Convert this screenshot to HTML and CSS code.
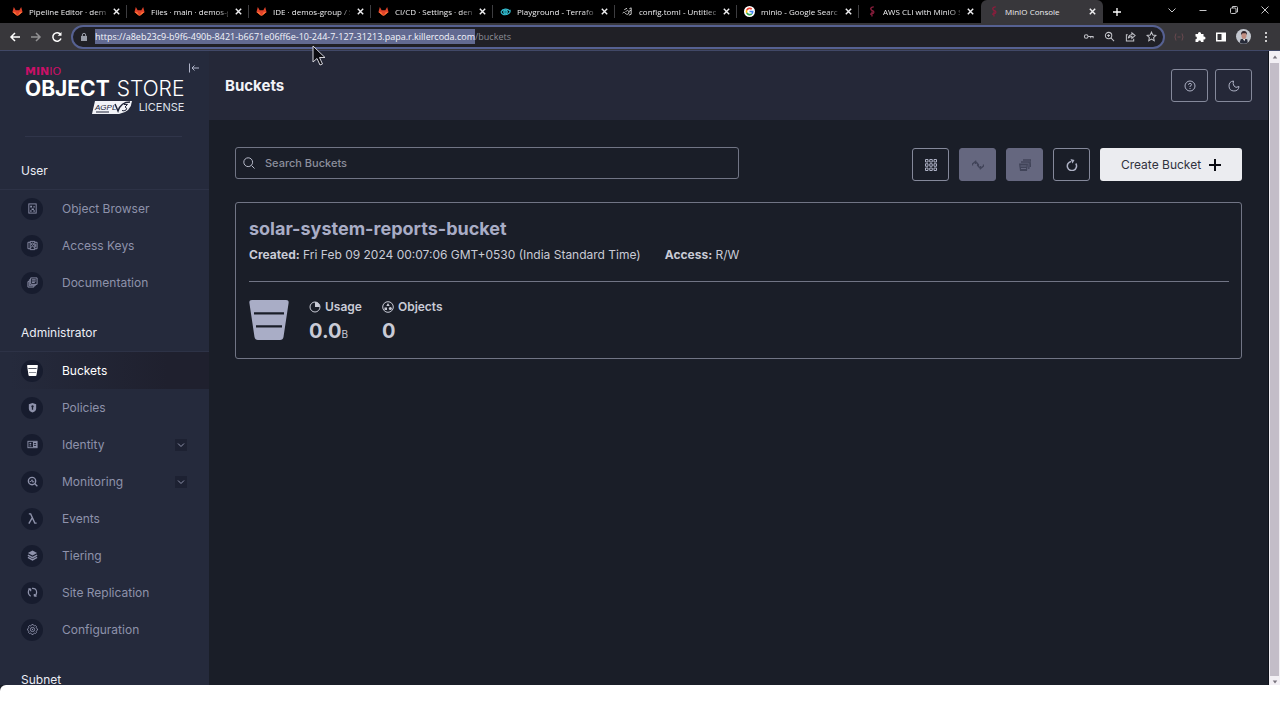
FILE: index.html
```html
<!DOCTYPE html>
<html lang="en">
<head>
<meta charset="utf-8">
<meta name="viewport" content="width=device-width, initial-scale=1">
<title>MinIO Console</title>
<link rel="stylesheet" href="styles.css">
</head>
<body>
<svg class="sprite" aria-hidden="true">
  <symbol id="fox" viewBox="0 0 24 24"><path fill="#e2432a" d="M12 22 1 13 4 2l4 7h8l4-7 3 11z"/><path fill="#fc6d3a" d="m12 22-5-9H1zM12 22l5-9h6z"/><path fill="#fca326" d="m12 22-5-5-3-2zM12 22l5-5 3-2z"/></symbol>
  <symbol id="stork" viewBox="0 0 24 24"><path fill="none" stroke="#8a1d3c" stroke-width="3" d="M17 2c-5 0-8 3-6 6s7 2 6 6c-1 3-5 3-8 4M13 12v11"/></symbol>
  <symbol id="x" viewBox="0 0 10 10"><path fill="none" stroke="currentColor" stroke-width="1.6" d="m2 2 6 6M8 2 2 8"/></symbol>
  <symbol id="chev" viewBox="0 0 10 10"><path fill="none" stroke="currentColor" stroke-width="1" d="m2 3.500 3 3 3-3"/></symbol>
  <symbol id="bucket" viewBox="0 0 40 40"><path fill="currentColor" fill-rule="evenodd" d="M3 0h34q3 0 2.600 3L34.500 37q-.5 3-3.500 3H9q-3 0-3.500-3L.4 3Q0 0 3 0zM5 12.200v2.300h30v-2.300zM7 25.200v2.300h26v-2.300z"/></symbol>
</svg>

<header class="browser">
  <div class="tabs">
    <div class="tab"><svg class="fav"><use href="#fox"/></svg><button class="tab-name">Pipeline Editor · demo</button><button class="close" aria-label="Close tab"><svg><use href="#x"/></svg></button></div>
    <div class="tab"><svg class="fav"><use href="#fox"/></svg><button class="tab-name">Files · main · demos-g</button><button class="close" aria-label="Close tab"><svg><use href="#x"/></svg></button></div>
    <div class="tab"><svg class="fav"><use href="#fox"/></svg><button class="tab-name">IDE · demos-group / S</button><button class="close" aria-label="Close tab"><svg><use href="#x"/></svg></button></div>
    <div class="tab"><svg class="fav"><use href="#fox"/></svg><button class="tab-name">CI/CD · Settings · den</button><button class="close" aria-label="Close tab"><svg><use href="#x"/></svg></button></div>
    <div class="tab"><svg class="fav" viewBox="0 0 24 24" fill="none" stroke="#35bdd0" stroke-width="2.500"><path d="M2 13c3-7 15-9 20-1M2 13c3 8 15 8 20 0V8M5 8l2 3"/><circle cx="12" cy="13" r="4" fill="#188b9c"/></svg><button class="tab-name">Playground - Terrafor</button><button class="close" aria-label="Close tab"><svg><use href="#x"/></svg></button></div>
    <div class="tab"><svg class="fav" viewBox="0 0 24 24" fill="none" stroke="#ddd" stroke-width="2"><path d="M1 16c3-4 5-2 8 2M5 8l6-3M8 13c3-5 6-4 7 0s-4 7-6 4M16 6l4-2v14l-5 2M20 9l-5 3"/></svg><button class="tab-name">config.toml - Untitled</button><button class="close" aria-label="Close tab"><svg><use href="#x"/></svg></button></div>
    <div class="tab"><svg class="fav" viewBox="0 0 24 24"><circle cx="12" cy="12" r="12" fill="#fff"/><g fill="none" stroke-width="3.500"><path stroke="#ea4335" d="M6 9a7 7 0 0 1 11-2"/><path stroke="#fbbc05" d="M6 15a7 7 0 0 1 0-6"/><path stroke="#34a853" d="M6 15a7 7 0 0 0 11 2"/><path stroke="#4285f4" d="M12 12h7q0 3-2 5"/></g></svg><button class="tab-name">minio - Google Searc</button><button class="close" aria-label="Close tab"><svg><use href="#x"/></svg></button></div>
    <div class="tab last"><svg class="fav"><use href="#stork"/></svg><button class="tab-name">AWS CLI with MinIO S</button><button class="close" aria-label="Close tab"><svg><use href="#x"/></svg></button></div>
    <div class="tab active"><svg class="fav"><use href="#stork"/></svg><button class="tab-name">MinIO Console</button><button class="close" aria-label="Close tab"><svg><use href="#x"/></svg></button></div>
    <button class="new-tab" aria-label="New tab"><svg viewBox="0 0 10 10" stroke="#fff" stroke-width="1.300"><path d="M5 1v8M1 5h8"/></svg></button>
    <div class="window-controls">
      <button aria-label="Search tabs"><svg viewBox="0 0 10 10"><path d="m1.500 3.500 3.500 3.500 3.500-3.500"/></svg></button>
      <button aria-label="Minimize"><svg viewBox="0 0 10 10"><path d="M1.500 5.500h7"/></svg></button>
      <button aria-label="Restore"><svg viewBox="0 0 10 10"><rect x="1.500" y="3" width="5.500" height="5.500" rx="1"/><path d="M3.500 3V1.500h4q1 0 1 1V7H7"/></svg></button>
      <button aria-label="Close window"><svg viewBox="0 0 10 10"><path d="m1.500 1.500 7 7M8.500 1.500l-7 7"/></svg></button>
    </div>
  </div>
  <div class="navbar">
    <div class="history">
      <button aria-label="Back"><svg viewBox="0 0 12 12"><path d="M11 6H2M6 2 2 6l4 4"/></svg></button>
      <button aria-label="Forward" disabled><svg viewBox="0 0 12 12"><path d="M1 6h9M6 2l4 4-4 4"/></svg></button>
      <button aria-label="Reload"><svg viewBox="0 0 12 12"><path d="M10 7.500A4.200 4.200 0 1 1 9.500 3.500"/><path d="M10.500 1v3.800H6.700z" fill="#fff" stroke="none"/></svg></button>
    </div>
    <div class="omnibox">
      <svg class="lock" viewBox="0 0 10 10"><rect x="2" y="4" width="6" height="5" fill="#999da8"/><path d="M3.300 4V3a1.700 1.700 0 0 1 3.400 0v1" fill="none" stroke="#999da8"/></svg>
      <input class="url" type="text" aria-label="Address" spellcheck="false" value="https://a8eb23c9-b9f6-490b-8421-b6671e06ff6e-10-244-7-127-31213.papa.r.killercoda.com/buckets">
      <div class="url-tools">
        <button aria-label="Passwords"><svg viewBox="0 0 12 12"><circle cx="3.500" cy="6" r="2"/><path d="M5.500 6h5.500v2M8.500 6v2"/></svg></button>
        <button aria-label="Zoom"><svg viewBox="0 0 12 12"><circle cx="5" cy="5" r="3.500"/><path d="m7.500 7.500 3.500 3.500M3.500 5h3M5 3.500v3"/></svg></button>
        <button aria-label="Share"><svg viewBox="0 0 12 12"><path d="M3 4H1.500v7h8V8.500M3.500 8c.5-3 2-4 4-4V2l3.500 3-3.500 3V6c-2 0-3 .5-4 2z"/></svg></button>
        <button aria-label="Bookmark"><svg viewBox="0 0 12 12"><path d="m6 1.200 1.400 3.200 3.400.4-2.500 2.400.7 3.500-3-1.800-3 1.800.7-3.500L1.200 4.800l3.400-.4z"/></svg></button>
      </div>
    </div>
    <div class="extensions">
      <button aria-label="Extension"><svg viewBox="0 0 12 12" fill="none" stroke="#69494f"><path d="M3 2.500Q1 6 3 9.500M9 2.500Q11 6 9 9.500M4.500 6h3"/></svg></button>
      <button aria-label="Extensions"><svg viewBox="0 0 12 12" fill="#fff"><path d="M1.500 3H4V2.500a1.500 1.500 0 0 1 3 0V3h2.500v2.500h.5a1.500 1.500 0 0 1 0 3h-.5V11H7a1.400 1.400 0 0 0-2.800 0H1.500V8.300a1.400 1.400 0 0 0 0-2.800z"/></svg></button>
      <button aria-label="Side panel"><svg viewBox="0 0 12 12"><path fill="#fff" fill-rule="evenodd" d="M1 1.500h10v9H1zM2.500 3v6h4V3z"/></svg></button>
      <button class="avatar" aria-label="Profile"><svg viewBox="0 0 16 16"><circle cx="8" cy="8" r="8" fill="#c3c7cf"/><path d="M4 14.500 5 11l3-1 4 1 .5 3.500Q8 17 4 14.500z" fill="#262a38"/><path d="m7 10 2 3 1-3z" fill="#eee"/><ellipse cx="8.500" cy="7" rx="2.700" ry="3.700" fill="#c08d81"/><path d="M5.500 6.500Q5 2 8.500 2t3.200 4.500L10.500 4.500H7z" fill="#30232a"/></svg></button>
      <button aria-label="Menu"><svg viewBox="0 0 12 12" fill="#fff"><circle cx="6" cy="2" r="1"/><circle cx="6" cy="6" r="1"/><circle cx="6" cy="10" r="1"/></svg></button>
    </div>
  </div>
  <svg class="pointer" viewBox="0 0 14 22" aria-hidden="true"><path d="M1 1v16l4-3.500 3 6.500 2.500-1-3-6.500H13z" fill="#0b0b10" stroke="#d5d5dd"/></svg>
</header>

<div class="app">
  <nav class="sidebar" aria-label="Console">
    <div class="brand">
      <div class="logo">
        <div class="logo-min"><b>MIN</b>IO</div>
        <div class="logo-name"><b>OBJECT</b><span>STORE</span></div>
        <div class="logo-license">
          <svg viewBox="0 0 40 13" role="img" aria-label="AGPL v3"><path d="M3 0h37q-1 11-13 13H0z" fill="#f2f3f8"/><text class="agpl" x="3" y="9">AGPL</text><path d="m23 3 3 7Q29 1 38 1" fill="none" stroke="#202438" stroke-width="1.500"/><path d="M32 3.500h3.500L33 6q3 1 1 3-2 1.500-4 .5M4 11h13" fill="none" stroke="#202438"/></svg>
          <span>LICENSE</span>
        </div>
      </div>
      <button class="collapse" aria-label="Collapse menu"><svg viewBox="0 0 12 12"><path d="M1.500 1.500v9M11 6H4M6.500 3.500 4 6l2.500 2.500"/></svg></button>
    </div>
    <h2>User</h2>
    <ul>
      <li><a href="#"><span class="disc"><svg viewBox="0 0 12 12"><rect x="2" y="1" width="8" height="10"/><path class="solid" d="M3.500 3h2v2h-2zM7 3.500h1.500V5H7zM5 6h2.500v1.500H5zM3.500 8h1.500v1.500H3.500zM7 8h1.500v1.500H7z"/></svg></span>Object Browser</a></li>
      <li><a href="#"><span class="disc"><svg viewBox="0 0 12 12"><path d="M3.500 2.500H1v7h2.500M8.500 2.500H11v7H8.500M3.500 1.500h5v9h-5z"/><circle cx="6" cy="4.500" r="1.200"/><path d="M4.200 9c0-3 3.600-3 3.600 0M9.500 4.500v3"/></svg></span>Access Keys</a></li>
      <li><a href="#"><span class="disc"><svg viewBox="0 0 12 12"><path d="M4 1h7v7H4zM4 3H2.500v6.500H9V8M2.500 5H1v6h6.500V9.500M5.500 3h4M5.500 4.500h4M5.500 6h3"/></svg></span>Documentation</a></li>
    </ul>
    <h2>Administrator</h2>
    <ul>
      <li><a href="#" class="current" aria-current="page"><span class="disc"><svg viewBox="0 0 40 40"><use href="#bucket"/></svg></span>Buckets</a></li>
      <li><a href="#"><span class="disc"><svg viewBox="0 0 12 12"><path class="solid" fill-rule="evenodd" d="M6 1 10 2.500V7Q10 10 6 11.500 2 10 2 7V2.500zM6 3.500a1.300 1.300 0 0 0-.7 2.400V8.500h1.400V5.900A1.300 1.300 0 0 0 6 3.500z"/></svg></span>Policies</a></li>
      <li><a href="#"><span class="disc"><svg viewBox="0 0 12 12"><rect x="1" y="2.500" width="10" height="7"/><circle class="solid" cx="3.700" cy="5" r="1"/><path class="solid" d="M2.300 8q1.400-2.500 2.800 0zM6.500 3H11v6H6.500z"/><path class="cut" d="M7.500 5h2.500M7.500 7h2.500"/></svg></span>Identity</a><button class="expand" aria-label="Expand Identity"><svg><use href="#chev"/></svg></button></li>
      <li><a href="#"><span class="disc"><svg viewBox="0 0 12 12"><circle cx="5.500" cy="5.500" r="4" class="thick"/><path class="thick" d="m8.300 8.300 3 3"/><path d="M3 6h1.500l1-2 1 3 .7-1.300H8"/></svg></span>Monitoring</a><button class="expand" aria-label="Expand Monitoring"><svg><use href="#chev"/></svg></button></li>
      <li><a href="#"><span class="disc"><svg viewBox="0 0 12 12"><path class="thick" d="M2 1h2l4.500 10h2M5.800 5 2 11.500"/></svg></span>Events</a></li>
      <li><a href="#"><span class="disc"><svg viewBox="0 0 12 12"><path class="solid" d="m6 .5 5 2.700-5 2.700-5-2.700z"/><path class="thick" d="m1 5.500 5 2.800 5-2.800M1 8l5 2.800L11 8"/></svg></span>Tiering</a></li>
      <li><a href="#"><span class="disc"><svg viewBox="0 0 12 12"><path class="mid" d="M4 10Q1 8 1.500 5T4 2H1.500M4 2v2.500M5.500 1.500Q10 1 10.500 5.500 10.500 9 8 10h2.500M8 10V7.500"/></svg></span>Site Replication</a></li>
      <li><a href="#"><span class="disc"><svg viewBox="0 0 12 12"><path d="m4.800 1.500.5-.9h1.400l.5.900 1.100.5 1-.3 1 1-.3 1 .5 1.100.9.500v1.400l-.9.500-.5 1.100.3 1-1 1-1-.3-1.100.5-.5.900H5.300l-.5-.9-1.100-.5-1 .3-1-1 .3-1-.5-1.100-.9-.5V5.300l.9-.5.500-1.100-.3-1 1-1 1 .3z"/><circle cx="6" cy="6" r="2.300"/><circle class="solid" cx="6" cy="6" r=".7"/></svg></span>Configuration</a></li>
    </ul>
    <h2>Subnet</h2>
  </nav>

  <main>
    <div class="page-head">
      <h1>Buckets</h1>
      <div class="head-actions">
        <button class="box" aria-label="Help"><svg viewBox="0 0 12 12"><circle cx="6" cy="6" r="5"/><path d="M4.500 4.800Q4.500 3.400 6 3.400t1.500 1.300Q7.500 5.700 6 6.200V7M6 8v1"/></svg></button>
        <button class="box" aria-label="Dark mode"><svg viewBox="0 0 12 12"><path d="M5.500 1A5 5 0 1 0 11 6.500Q7.500 8.500 6 6T5.500 1z"/></svg></button>
      </div>
    </div>
    <div class="content">
      <div class="tools">
        <label class="search"><svg viewBox="0 0 12 12"><circle cx="5.200" cy="5.200" r="4.400"/><path d="m8.500 8.500 3 3"/></svg><input type="search" placeholder="Search Buckets" aria-label="Search Buckets"></label>
        <div class="tool-buttons">
          <button class="box" aria-label="Select multiple"><svg viewBox="0 0 12 12"><path d="M.5.5h2.500V3H.5zM4.750.5h2.500V3h-2.500zM9 .5h2.500V3H9zM.5 4.750h2.500v2.500H.5zM4.750 4.750h2.500v2.500h-2.500zM9 4.750h2.500v2.500H9zM.5 9h2.500v2.500H.5zM4.750 9h2.500v2.500h-2.500zM9 9h2.500v2.500H9z"/></svg></button>
          <button class="box" disabled aria-label="Set lifecycle"><svg viewBox="0 0 12 12"><path class="mid" d="M.5 6.500V5l3-2.500V5M3.500 2.500 6 5M11.500 5.500V7l-3 2.500V7M8.500 9.500 6 7"/><circle class="solid" cx="6" cy="6" r="1.200"/></svg></button>
          <button class="box" disabled aria-label="Set replication"><svg viewBox="0 0 12 12"><path class="solid" d="M0 4.500h9L8 12H1z"/><path class="mid" d="M2 3h8.300L9.800 10M4 1h8l-.5 7"/><path d="M1.500 7h6M2 9.500h5" class="gap"/></svg></button>
          <button class="box" aria-label="Refresh"><svg viewBox="0 0 12 12"><path class="thick" d="M9.800 4.500A4.600 4.600 0 1 1 5 2.500"/><path class="solid" d="m4.500 0 4 1-2 3.500z"/></svg></button>
          <button class="create">Create Bucket<svg viewBox="0 0 12 12"><path d="M6 0v12M0 6h12"/></svg></button>
        </div>
      </div>
      <article class="card">
        <h3>solar-system-reports-bucket</h3>
        <p class="meta"><span><b>Created:</b> Fri Feb 09 2024 00:07:06 GMT+0530 (India Standard Time)</span><span><b>Access:</b> R/W</span></p>
        <div class="stats">
          <svg class="big-bucket"><use href="#bucket"/></svg>
          <div class="stat"><div class="label"><svg viewBox="0 0 12 12"><circle cx="6" cy="6" r="5"/><path class="solid" d="M6 1v5h5A5 5 0 0 0 6 1z"/></svg>Usage</div><div class="value">0.0<small>B</small></div></div>
          <div class="stat"><div class="label"><svg viewBox="0 0 12 12"><circle cx="6" cy="6" r="5.300"/><path class="solid" d="M6 2 7.700 5H4.300zM2.500 6.500H5V9H2.500z"/><circle class="solid" cx="8.300" cy="7.600" r="1.500"/></svg>Objects</div><div class="value">0</div></div>
        </div>
      </article>
    </div>
  </main>

  <div class="scroll-track" aria-hidden="true"><svg viewBox="0 0 8 8"><path d="m1 6 3-4 3 4z"/></svg><div class="scroll-thumb"></div><svg viewBox="0 0 8 8"><path d="m1 2 3 4 3-4z"/></svg></div>
</div>
<div class="sheet"></div>
<script src="app.js"></script>
</body>
</html>
```
FILE: styles.css
```css
* { box-sizing: border-box; }
body {
  margin: 0;
  height: 100vh;
  display: flex;
  flex-direction: column;
  background: #1a1e28;
  color: #fff;
  font-family: Inter, "Liberation Sans", sans-serif;
  overflow: hidden;
}
button { border: 0; padding: 0; margin: 0; background: none; color: inherit; font: inherit; display: grid; place-items: center; }
svg { display: block; flex: none; }
ul { list-style: none; margin: 0; padding: 0; }
h1, h2, h3, p { margin: 0; }
.sprite { position: absolute; width: 0; height: 0; }

/* Browser frame */
.browser { position: relative; flex: none; font-family: "Open Sans", "Noto Sans", sans-serif; background: #38373b; border-bottom: 1px solid #414867; }
.tabs { display: flex; align-items: center; height: 23px; padding-left: 5px; background: #000; }
.tab { flex: 0 1 122px; min-width: 0; height: 100%; display: flex; align-items: center; padding: 0 6px 0 7px; font-size: 8px; font-weight: 500; color: #eeeef0; position: relative; }
.tab::after { content: ""; position: absolute; right: 0; top: 5px; height: 13px; border-right: 1px solid #3d3d40; }
.tab.last::after, .tab.active::after { display: none; }
.tab.active { background: #38373b; border-radius: 6px 6px 0 0; }
.fav { width: 11px; height: 11px; margin-right: 6px; }
.tab-name { flex: 1; min-width: 0; white-space: nowrap; text-align: left; display: block; -webkit-mask-image: linear-gradient(to right, #000 85%, #0005); mask-image: linear-gradient(to right, #000 85%, #0005); }
.tab.active .tab-name { -webkit-mask-image: none; mask-image: none; }
.close { margin-left: 6px; }
.close svg { width: 9px; height: 9px; }
.new-tab { width: 28px; }
.new-tab svg { width: 10px; height: 10px; }
.window-controls { margin-left: auto; display: flex; align-self: flex-start; height: 19px; }
.window-controls button { width: 31px; }
.window-controls svg { width: 10px; height: 10px; fill: none; stroke: #c6c6c8; stroke-width: 1; }
.navbar { display: flex; align-items: center; height: 27px; padding: 1px 8px 1px 9px; }
.history { display: flex; gap: 9px; padding-right: 8px; }
.history svg { width: 12px; height: 12px; fill: none; stroke: #fff; stroke-width: 1.500; }
.history button:disabled { opacity: .45; }
.omnibox { flex: 1; height: 24px; display: flex; align-items: center; padding: 0 6px; border: 2px solid #566192; border-radius: 12px; background: #202026; }
.lock { width: 10px; height: 10px; }
.url { flex: 1; min-width: 0; border: 0; padding: 0; margin-left: 6px; background: none; color: #8d8e96; font: 9px/15px "Open Sans", "Noto Sans", sans-serif; outline: 0; }
.url::selection { background: #626a91; color: #f4f5fb; }
.url-tools { display: flex; gap: 10px; }
.url-tools svg { width: 11px; height: 11px; fill: none; stroke: #c3c4ca; stroke-width: 1.100; }
.extensions { display: flex; align-items: center; gap: 9px; padding-left: 8px; }
.extensions svg { width: 12px; height: 12px; }
.extensions .avatar svg { width: 15px; height: 15px; }
.pointer { position: absolute; left: 312px; top: 45px; width: 14px; height: 22px; z-index: 2; }

/* Sidebar */
.app { flex: 1; min-height: 0; display: flex; overflow: hidden; }
.sidebar { flex: none; width: 209px; background: #252a3c; }
.brand { display: flex; height: 86px; margin: 0 27px 0 25px; padding-top: 16px; border-bottom: 1px solid #30354a; position: relative; }
.logo-min { font: 11px/9px "DejaVu Sans", sans-serif; color: #cb1068; }
.logo-name { display: flex; gap: 7px; font-size: 21px; line-height: 25px; }
.logo-name span { font-weight: 300; }
.logo-license { display: flex; justify-content: flex-end; align-items: center; gap: 7px; font-size: 11px; line-height: 13px; color: #dfe1ea; }
.logo-license svg { width: 40px; height: 13px; }
.agpl { font: italic 8px "Liberation Sans", sans-serif; fill: #202438; }
.collapse { position: absolute; right: -18px; top: 11px; }
.collapse svg { width: 12px; height: 12px; fill: none; stroke: #b0b4c9; }
.sidebar h2 { height: 52px; padding: 23px 0 0 21px; font-size: 12px; line-height: 22px; font-weight: 400; color: #eceef6; }
.sidebar ul + h2 { height: 50px; padding-top: 21px; }
.sidebar ul { border-top: 1px solid #2d3246; }
.sidebar li { height: 37px; display: flex; align-items: center; }
.sidebar a { flex: 1; height: 37px; display: flex; align-items: center; gap: 19px; padding-left: 21px; color: #8e92ab; text-decoration: none; font-size: 12px; }
.sidebar a.current { color: #fff; background: linear-gradient(to right, #252a3c 5%, #1f202e 80%); }
.disc { width: 22px; height: 22px; border-radius: 50%; background: #171c2e; display: grid; place-items: center; }
.disc svg { width: 11px; height: 11px; fill: none; stroke: currentColor; }
.current .disc svg { stroke: none; }
.solid { fill: currentColor; stroke: none; }
.mid { stroke-width: 1.300; }
.thick { stroke-width: 1.500; }
.cut { stroke: #171c2e; stroke-width: 1; }
.expand { width: 12px; height: 12px; margin-right: 22px; background: #1d2132; color: #8e92ab; }
.expand svg { width: 10px; height: 10px; }

/* Page */
main { flex: 1; min-width: 0; }
.page-head { height: 69px; display: flex; align-items: center; justify-content: space-between; padding: 0 16px; background: #252838; }
h1 { font-size: 15px; line-height: 20px; font-weight: 700; color: #f2f3f8; }
.head-actions { display: flex; gap: 7px; }
.box { width: 37px; height: 33px; border: 1px solid #85899b; border-radius: 3px; color: #adb1c4; }
.box svg { width: 12px; height: 12px; fill: none; stroke: currentColor; stroke-width: 1; }
.box:disabled { background: #65677f; border-color: #65677f; color: #414459; }
.box .gap { stroke: #65677f; }
.content { padding: 27px 26px; }
.tools { display: flex; align-items: flex-end; justify-content: space-between; height: 34px; gap: 24px; }
.search { align-self: flex-start; flex: 0 1 504px; height: 32px; display: flex; align-items: center; gap: 10px; padding: 0 7px; border: 1px solid #717585; border-radius: 3px; }
.search svg { width: 12px; height: 12px; fill: none; stroke: #b8bbca; }
.search input { flex: 1; min-width: 0; border: 0; padding: 0; outline: 0; background: none; color: #fff; font: 500 11px/16px Inter, "Liberation Sans", sans-serif; }
.search input::placeholder { color: #8c8f9c; opacity: 1; }
.tool-buttons { display: flex; gap: 10px; }
.create { display: flex; align-items: center; justify-content: center; gap: 8px; width: 142px; height: 33px; border-radius: 3px; background: #ebecf0; color: #30323e; font-size: 12px; font-weight: 400; }
.create svg { width: 12px; height: 12px; stroke: #090b12; stroke-width: 2; }
.card { margin-top: 21px; padding: 14px 12px 14px 13px; border: 1px solid #717585; border-radius: 3px; color: #c9cbd6; }
.card h3 { font-size: 18px; line-height: 24px; font-weight: 700; color: #a9adc6; }
.meta { display: flex; gap: 24px; padding: 4px 0 16px; border-bottom: 1px solid #717585; font-size: 12px; line-height: 20px; }
.stats { display: flex; align-items: flex-start; padding-top: 14px; }
.big-bucket { width: 40px; height: 40px; margin: 4px 20px 0 0; color: #a9adc6; }
.stat { margin-right: 20px; }
.label { display: flex; align-items: center; gap: 4px; font-size: 12px; line-height: 22px; font-weight: 600; }
.label svg { width: 12px; height: 12px; fill: none; stroke: currentColor; }
.value { height: 26px; font-size: 20px; line-height: 26px; font-weight: 700; }
.value small { font-size: 10px; line-height: 10px; font-weight: 400; }

.scroll-track { flex: none; width: 12px; display: flex; flex-direction: column; align-items: center; gap: 3px; padding: 3px 0 0; background: #f2eff4; border-left: 1px solid #0f121a; }
.scroll-track svg { width: 6px; height: 6px; fill: #77727c; }
.scroll-thumb { flex: 1; width: 9px; background: #c3bdc8; }
.sheet { flex: none; height: 35px; background: #fff; border-radius: 6px 0 0 0; }
```
FILE: app.js
```js
const url = document.querySelector('.url');
url.focus({ preventScroll: true });
url.setSelectionRange(0, url.value.lastIndexOf('/'));
```
